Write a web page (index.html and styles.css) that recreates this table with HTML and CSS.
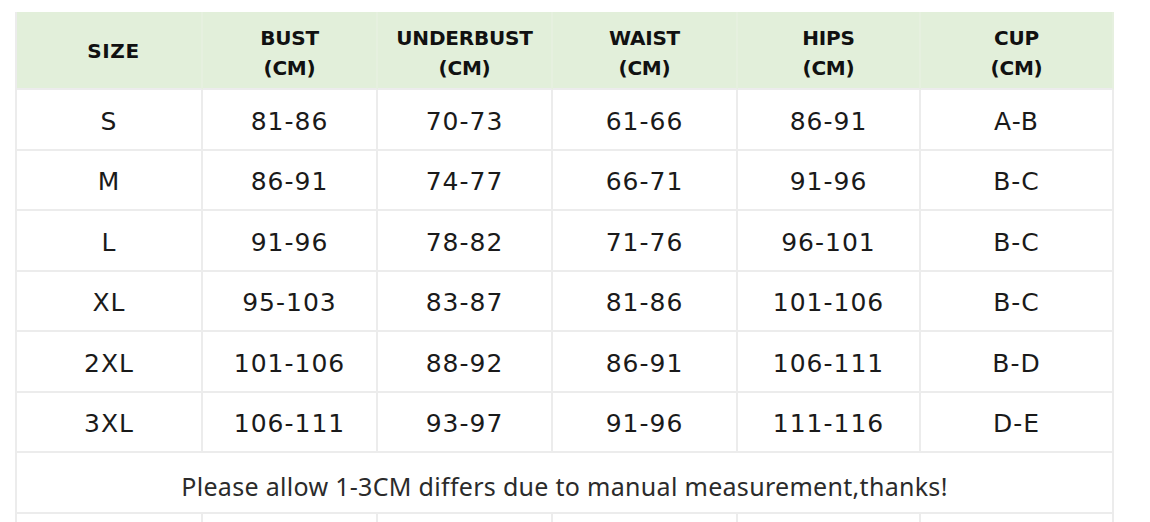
FILE: index.html
```html
<!DOCTYPE html>
<html lang="en">
<head>
<meta charset="utf-8">
<title>Size chart</title>
<link rel="stylesheet" href="styles.css">
</head>
<body>
<div class="chart">
  <div class="cell head single">SIZE</div>
  <div class="cell head">BUST<br>(CM)</div>
  <div class="cell head">UNDERBUST<br>(CM)</div>
  <div class="cell head">WAIST<br>(CM)</div>
  <div class="cell head">HIPS<br>(CM)</div>
  <div class="cell head">CUP<br>(CM)</div>

  <div class="cell">S</div><div class="cell">81-86</div><div class="cell">70-73</div><div class="cell">61-66</div><div class="cell">86-91</div><div class="cell">A-B</div>
  <div class="cell">M</div><div class="cell">86-91</div><div class="cell">74-77</div><div class="cell">66-71</div><div class="cell">91-96</div><div class="cell">B-C</div>
  <div class="cell">L</div><div class="cell">91-96</div><div class="cell">78-82</div><div class="cell">71-76</div><div class="cell">96-101</div><div class="cell">B-C</div>
  <div class="cell">XL</div><div class="cell">95-103</div><div class="cell">83-87</div><div class="cell">81-86</div><div class="cell">101-106</div><div class="cell">B-C</div>
  <div class="cell">2XL</div><div class="cell">101-106</div><div class="cell">88-92</div><div class="cell">86-91</div><div class="cell">106-111</div><div class="cell">B-D</div>
  <div class="cell">3XL</div><div class="cell">106-111</div><div class="cell">93-97</div><div class="cell">91-96</div><div class="cell">111-116</div><div class="cell">D-E</div>

  <div class="cell note">Please allow 1-3CM differs due to manual measurement,thanks!</div>

  <div class="stub"></div><div class="stub"></div><div class="stub"></div><div class="stub"></div><div class="stub"></div><div class="stub"></div>
</div>
</body>
</html>
```

FILE: styles.css
```css
html, body {
  margin: 0;
  padding: 0;
  background: #ffffff;
}

body {
  padding: 12px 0 0 15px;
}

.chart {
  display: grid;
  width: 1099px;
  box-sizing: border-box;
  grid-template-columns: 186px 175px 175px 185px 183px 193px;
  grid-template-rows: 78px repeat(7, 60.5px) 8px;
  border-left: 2px solid #ececec;
  font-family: "DejaVu Sans", sans-serif;
  color: #1a1a1a;
}

.cell {
  display: flex;
  align-items: center;
  justify-content: center;
  text-align: center;
  box-sizing: border-box;
  padding-top: 4px;
  border-right: 2px solid #ececec;
  border-bottom: 2px solid #ececec;
  font-size: 25px;
  letter-spacing: 1px;
}

.head {
  background: #e2efda;
  border-right-color: #e6f0df;
  padding-top: 6px;
  font-weight: bold;
  font-size: 20px;
  line-height: 30px;
  letter-spacing: -0.2px;
  color: #111111;
}

.head.single {
  padding-top: 2px;
  padding-left: 9px;
  letter-spacing: 0.6px;
}

.head:last-of-type {
  border-right-color: #ececec;
}

.note {
  grid-column: 1 / -1;
  padding-top: 7px;
  font-family: "Noto Sans", "DejaVu Sans", sans-serif;
  font-size: 25px;
  letter-spacing: 0.3px;
  color: #2b2b2b;
}

.stub {
  border-right: 2px solid #ececec;
}
```
